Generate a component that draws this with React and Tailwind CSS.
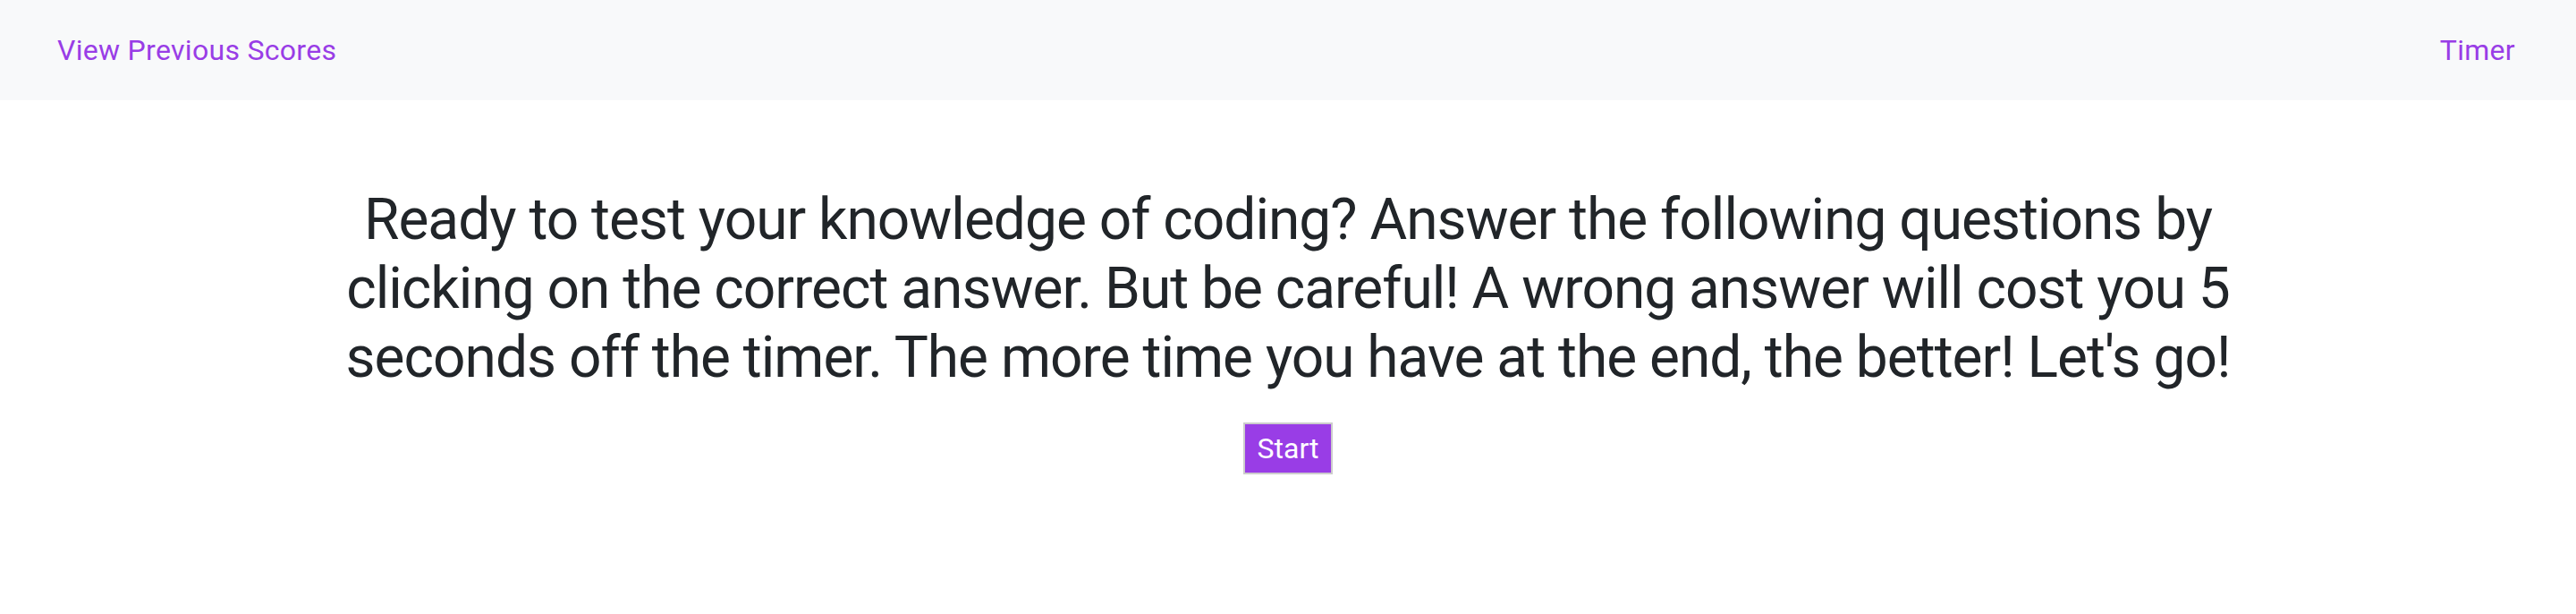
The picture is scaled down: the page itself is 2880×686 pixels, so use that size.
import React from 'react';

export default function App() {
  const font = { fontFamily: 'Roboto, "Noto Sans", sans-serif' };

  return (
    <div className="min-h-screen bg-white text-[#212529]" style={font}>
      {/* Navbar */}
      <nav className="h-[112px] bg-[#f8f9fa] flex items-center justify-between pl-[64px] pr-[68px]">
        <a href="#" className="text-[32px] leading-[48px] tracking-[0.3px] text-[#993de6]">
          View Previous Scores
        </a>
        <span className="text-[32px] leading-[48px] tracking-[0.3px] text-[#993de6]">Timer</span>
      </nav>

      <main className="flex flex-col items-center">
        <h2 className="mt-[96px] text-center text-[64px] leading-[76.8px] font-normal tracking-[-1px]">
          Ready to test your knowledge of coding? Answer the following questions by
          <br />
          clicking on the correct answer. But be careful! A wrong answer will cost you 5
          <br />
          seconds off the timer. The more time you have at the end, the better! Let's go!
        </h2>
        <button className="mt-[34px] bg-[#993de6] text-white text-[32px] leading-[40px] py-[7px] px-[14px] border-2 border-[#cccccc]">
          Start
        </button>
      </main>
    </div>
  );
}
